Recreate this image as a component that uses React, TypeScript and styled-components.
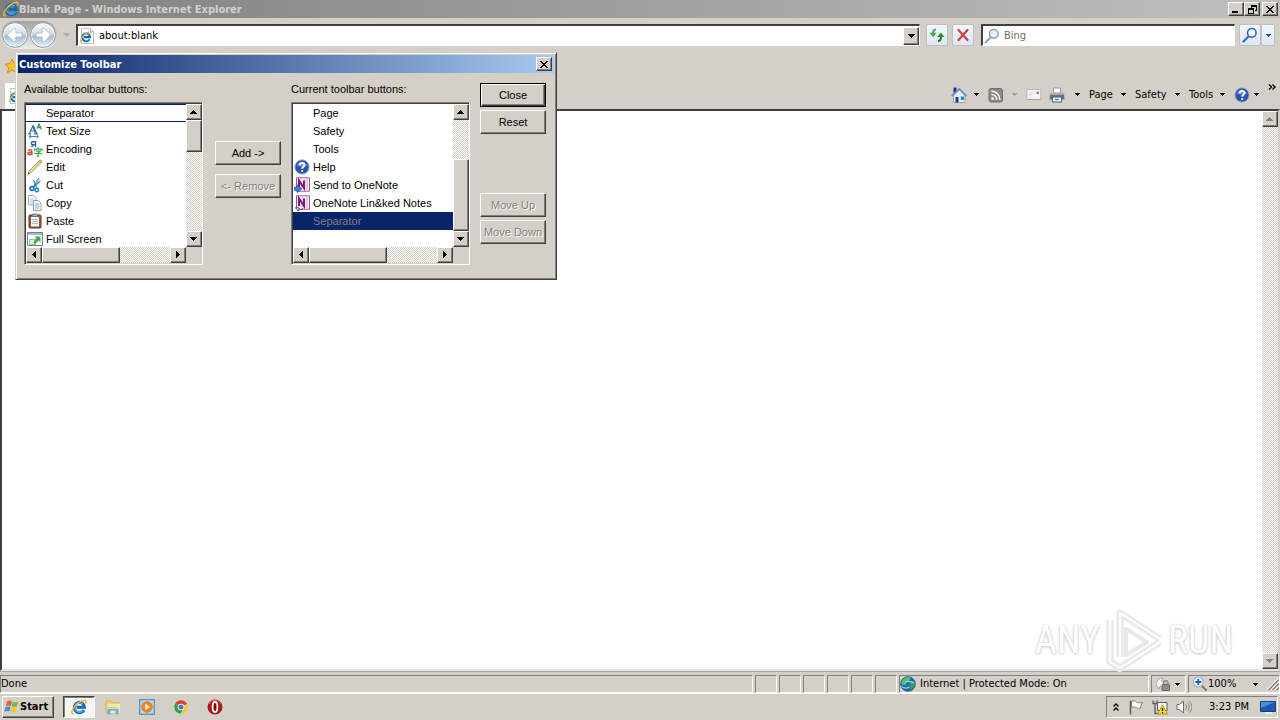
import React from "react";
import styled, { createGlobalStyle, css } from "styled-components";

const FACE = "#d4d0c8";
const UI = '"DejaVu Sans Condensed", "DejaVu Sans", sans-serif';
const DIALOG = '"Liberation Sans", sans-serif';

const GlobalStyle = createGlobalStyle`
  *, *::before, *::after { box-sizing: border-box; }
  body { margin: 0; background: ${FACE}; }
  button, input { font: inherit; color: inherit; margin: 0; }
  svg { display: block; flex: none; }
`;

const raised = css`
  border: 1px solid;
  border-color: #fff #404040 #404040 #fff;
  box-shadow: inset -1px -1px 0 #808080;
`;

const sunken = css`
  border: 1px solid;
  border-color: #808080 #fff #fff #808080;
`;

const dither = css`
  background: repeating-conic-gradient(#fff 0 25%, ${FACE} 0 50%) 0 0 / 2px 2px;
`;

const Desktop = styled.div`
  position: relative;
  display: flex;
  flex-direction: column;
  min-height: 100vh;
  overflow: hidden;
  background: ${FACE};
  color: #000;
  font: 11px/14px ${UI};
`;

/* ---------- window frame ---------- */

const TitleBar = styled.header`
  display: flex;
  align-items: center;
  height: 18px;
  padding: 0 2px 0 3px;
  background: linear-gradient(90deg, #808080, #c0c0c0);
  color: ${FACE};
`;

const WindowTitle = styled.h1`
  flex: 1;
  margin: 0;
  padding-top: 2px;
  font-size: 11px;
  line-height: 14px;
  font-weight: bold;
`;

const CaptionButton = styled.button<{ $gap?: boolean }>`
  ${raised}
  display: flex;
  align-items: center;
  justify-content: center;
  width: 16px;
  height: 14px;
  padding: 0;
  margin-left: ${(p) => (p.$gap ? 2 : 0)}px;
  background: ${FACE};
  color: #000;
`;

const NavRow = styled.nav`
  display: flex;
  align-items: center;
  height: 34px;
  padding-right: 5px;
`;

const TravelButton = styled.button`
  padding: 0;
  border: 0;
  background: none;
  width: 28px;
  height: 28px;
`;

const Travel = styled.div`
  display: flex;
  margin-left: 1px;
  border-radius: 14px;
  background: linear-gradient(#a5a19b, #eeece8);
`;

const HistoryButton = styled.button`
  display: flex;
  justify-content: center;
  width: 19px;
  padding: 0;
  border: 0;
  background: none;
`;

const Field = styled.div<{ $search?: boolean }>`
  display: flex;
  align-items: center;
  flex: ${(p) => (p.$search ? "0 1 254px" : "1 1 0")};
  min-width: 0;
  height: 22px;
  margin-left: ${(p) => (p.$search ? 7 : 0)}px;
  background: #fff;
  border: 1px solid;
  border-color: #404040 #fff #fff #404040;
  border-top-width: 2px;
  border-left-width: 2px;
  padding-left: 1px;
`;

const FieldInput = styled.input`
  flex: 1;
  min-width: 0;
  height: 18px;
  padding: 0 0 0 4px;
  border: 0;
  outline: 0;
  background: none;
  &::placeholder { color: #6d6d6d; opacity: 1; }
`;

const ComboButton = styled.button`
  ${raised}
  display: flex;
  align-items: center;
  justify-content: center;
  width: 16px;
  height: 18px;
  padding: 0;
  background: ${FACE};
`;

const ToolButton = styled.button<{ $w: number; $gap: number }>`
  display: flex;
  align-items: center;
  justify-content: center;
  width: ${(p) => p.$w}px;
  height: 22px;
  padding: 0;
  margin-left: ${(p) => p.$gap}px;
  border: 1px solid #b9c0cc;
  border-radius: 2px;
  background: linear-gradient(#f4f7fb, #dfe6f0);
`;

const FavoritesRow = styled.div`
  display: flex;
  align-items: center;
  height: 28px;
  padding-left: 4px;
`;

const CommandRow = styled.div`
  display: flex;
  align-items: flex-end;
  justify-content: space-between;
  height: 29px;
  padding-left: 5px;
`;

const PageTab = styled.div`
  display: flex;
  align-items: center;
  width: 200px;
  height: 26px;
  padding-left: 3px;
  background: #fff;
`;

const CommandBar = styled.div`
  display: flex;
  align-items: center;
  height: 29px;
`;

const Command = styled.button<{ $w: number }>`
  display: flex;
  align-items: center;
  justify-content: space-between;
  width: ${(p) => p.$w}px;
  height: 20px;
  padding: 0 9px 0 0;
  border: 0;
  background: none;
  white-space: nowrap;
  line-height: 14px;
`;

const Overflow = styled.button`
  align-self: flex-start;
  width: 12px;
  padding: 3px 0 0;
  border: 0;
  background: none;
`;

const Viewport = styled.main`
  display: flex;
  flex: 1;
  justify-content: flex-end;
  border: 2px solid;
  border-color: #404040 ${FACE} #e6e4de #404040;
  background: #fff;
`;

/* ---------- scroll bars ---------- */

const Bar = styled.div<{ $h?: boolean }>`
  ${dither}
  display: flex;
  flex-direction: ${(p) => (p.$h ? "row" : "column")};
  justify-content: space-between;
  width: ${(p) => (p.$h ? "auto" : "16px")};
  height: ${(p) => (p.$h ? "16px" : "auto")};
`;

const ScrollButton = styled.button`
  ${raised}
  display: flex;
  align-items: center;
  justify-content: center;
  flex: none;
  width: 16px;
  height: 16px;
  padding: 0 1px 1px 0;
  background: ${FACE};
`;

const Thumb = styled.div<{ $size: number; $h?: boolean; $end?: boolean }>`
  ${raised}
  background: ${FACE};
  flex: none;
  ${(p) => (p.$h ? `width: ${p.$size}px;` : `height: ${p.$size}px;`)}
  ${(p) => (p.$end ? "margin-top: auto;" : p.$h ? "margin-right: auto;" : "margin-bottom: auto;")}
`;

/* ---------- dialog ---------- */

const Dialog = styled.section`
  position: absolute;
  left: 15px;
  top: 52px;
  width: 542px;
  padding: 2px 2px 14px;
  background: ${FACE};
  border: 1px solid;
  border-color: ${FACE} #404040 #404040 ${FACE};
  box-shadow: inset 1px 1px 0 #fff, inset -1px -1px 0 #808080;
  font: 11px/14px ${DIALOG};
`;

const DialogTitle = styled.header`
  display: flex;
  align-items: center;
  justify-content: space-between;
  height: 18px;
  padding: 0 2px 0 1px;
  background: linear-gradient(90deg, #0a246a, #a6caf0);
`;

const DialogTitleText = styled.h2`
  margin: 0;
  padding-top: 2px;
  color: #fff;
  font: bold 11px/14px ${UI};
`;

const DialogBody = styled.div`
  display: grid;
  grid-template-columns: 179px 68px 179px 66px;
  column-gap: 10px;
  padding: 9px 0 0 6px;
`;

const ListColumn = styled.div`
  display: flex;
  flex-direction: column;
  gap: 6px;
`;

const ListLabel = styled.span`
  line-height: 14px;
`;

const ListFrame = styled.div`
  display: grid;
  grid-template-columns: 1fr 16px;
  grid-template-rows: 143px 16px;
  border: 1px solid;
  border-color: #808080 #fff #fff #808080;
  box-shadow: inset 1px 1px 0 #404040;
  padding: 1px 0 1px 1px;
  background: ${FACE};
`;

const List = styled.ul`
  margin: 0;
  padding: 0;
  overflow: hidden;
  list-style: none;
  background: #fff;
`;

const Item = styled.li<{ $state?: "focus" | "selected" }>`
  display: flex;
  align-items: center;
  gap: 3px;
  height: 18px;
  padding-left: 1px;
  line-height: 14px;
  white-space: nowrap;
  ${(p) => p.$state === "focus" && "box-shadow: inset 0 -1px 0 #0a246a, inset 0 1px 0 #0a246a;"}
  ${(p) => p.$state === "selected" && "background: #0a246a; color: #808080;"}
`;

const IconSlot = styled.span`
  display: flex;
  justify-content: center;
  width: 16px;
`;

const MoveColumn = styled.div`
  display: flex;
  flex-direction: column;
  align-items: flex-end;
  gap: 9px;
  padding-top: 59px;
`;

const ActionColumn = styled.div`
  display: flex;
  flex-direction: column;
  gap: 3px;
  padding-top: 1px;
`;

const PushButton = styled.button<{ $default?: boolean; $push?: boolean }>`
  ${raised}
  width: 66px;
  height: 24px;
  padding: 0;
  margin-top: ${(p) => (p.$push ? 56 : 0)}px;
  background: ${FACE};
  white-space: nowrap;
  ${(p) =>
    p.$default &&
    "border-color: #000; box-shadow: inset 1px 1px 0 #fff, inset -1px -1px 0 #404040, inset -2px -2px 0 #808080;"}
  &:disabled { color: #808080; text-shadow: 1px 1px 0 #fff; }
`;

/* ---------- status bar and task bar ---------- */

const StatusBar = styled.footer`
  display: flex;
  gap: 2px;
  height: 23px;
  padding: 3px 0 0;
  border-bottom: 1px solid #fff;
  border-top: 1px solid #aaa69e;
`;

const StatusCell = styled.div<{ $w?: number }>`
  ${sunken}
  display: flex;
  align-items: center;
  gap: 4px;
  ${(p) => (p.$w ? `flex: 0 0 ${p.$w}px;` : "flex: 1;")}
  white-space: nowrap;
`;

const StatusButton = styled.button`
  display: flex;
  align-items: center;
  justify-content: space-between;
  flex: 1;
  height: 16px;
  padding: 0 5px 0 3px;
  border: 0;
  background: none;
`;

const ZoomLabel = styled.span`
  flex: 1;
  text-align: left;
`;

const TaskBar = styled.footer`
  display: flex;
  align-items: center;
  height: 26px;
  padding: 0 2px;
`;

const StartButton = styled.button`
  ${raised}
  display: flex;
  align-items: center;
  width: 52px;
  height: 22px;
  padding: 0 0 0 1px;
  background: ${FACE};
  font-weight: bold;
`;

const TaskButton = styled.button<{ $active?: boolean }>`
  display: flex;
  align-items: center;
  justify-content: center;
  width: ${(p) => (p.$active ? 32 : 34)}px;
  height: 22px;
  padding: 0;
  border: 0;
  background: none;
  ${(p) =>
    p.$active &&
    css`
      margin: 0 1px 0 9px;
      border: 1px solid;
      border-color: #404040 #fff #fff #404040;
      background: #f6f5f3;
      box-shadow: inset 1px 1px 0 #808080;
    `}
`;

const Tray = styled.div`
  ${sunken}
  display: flex;
  align-items: center;
  gap: 8px;
  width: 172px;
  height: 22px;
  margin-left: auto;
  padding: 0 1px 0 5px;
`;

const TrayChevron = styled.span`
  width: 8px;
`;

const Clock = styled.time`
  flex: 1;
  padding-left: 6px;
  text-align: center;
  white-space: nowrap;
`;

/* ---------- watermark ---------- */

const Watermark = styled.div`
  position: absolute;
  right: 47px;
  bottom: 47px;
  display: flex;
  align-items: center;
  gap: 4px;
  color: #fff;
  font: 38px/64px "Roboto Condensed", "DejaVu Sans Condensed", sans-serif;
  text-shadow: 0 0 2px #c4c4c4, 0 1px 3px #cccccc;
  pointer-events: none;
`;

/* ---------- drawings ---------- */

type Dir = "up" | "down" | "left" | "right";
const arrows: Record<Dir, { w: number; h: number; d: string }> = {
  down: { w: 7, h: 4, d: "M0 0h7v1h-1v1h-1v1h-1v1h-1v-1h-1v-1h-1v-1h-1z" },
  up: { w: 7, h: 4, d: "M3 0h1v1h1v1h1v1h1v1h-7v-1h1v-1h1v-1h1z" },
  left: { w: 4, h: 7, d: "M4 0v7h-1v-1h-1v-1h-1v-1h-1v-1h1v-1h1v-1h1v-1z" },
  right: { w: 4, h: 7, d: "M0 0v7h1v-1h1v-1h1v-1h1v-1h-1v-1h-1v-1h-1v-1z" },
};
const Arrow = ({ dir = "down", color = "#000" }: { dir?: Dir; color?: string }) => {
  const a = arrows[dir];
  return (
    <svg width={a.w} height={a.h} viewBox={`0 0 ${a.w} ${a.h}`} shapeRendering="crispEdges" aria-hidden="true">
      <path d={a.d} fill={color} />
    </svg>
  );
};
const SmallArrow = ({ color = "#000" }: { color?: string }) => (
  <svg width="5" height="3" shapeRendering="crispEdges" aria-hidden="true">
    <path d="M0 0h5v1h-1v1h-1v1h-1v-1h-1v-1h-1z" fill={color} />
  </svg>
);

const Svg = ({ size = 16, children }: { size?: number; children: React.ReactNode }) => (
  <svg width={size} height={size} viewBox="0 0 16 16" aria-hidden="true">
    {children}
  </svg>
);

const IeMark = () => (
  <>
    <path d="M13 11A5.200 5.200 0 1 1 13.600 8.300H5.500" fill="none" stroke="#1268bd" strokeWidth="2.900" />
    <path d="M12.300 11.300A4.900 4.900 0 0 1 3.700 9" fill="none" stroke="#49b9f0" strokeWidth="1.100" />
    <path d="M4.200 5.800A5 5 0 0 1 11.800 5.200" fill="none" stroke="#6fcdf7" strokeWidth="1.100" />
    <path d="M2.800 14.600C-.8 15.800.6 10.600 4.400 6.600 8.600 2.200 14.600-.6 15 2.200c.1.800-.3 1.800-.8 2.700" fill="none" stroke="#f2b91f" strokeWidth="1.400" />
  </>
);
const IeIcon = ({ size = 16 }: { size?: number }) => (
  <Svg size={size}>
    <IeMark />
  </Svg>
);
const IePageIcon = () => (
  <Svg>
    <path d="M2.500.5h9l3 3v12h-12z" fill="#fff" stroke="#b9c1cb" />
    <path d="M11.500.5v3h3" fill="none" stroke="#b9c1cb" />
    <g transform="translate(1 3) scale(.74)">
      <IeMark />
    </g>
  </Svg>
);
const TravelIcon = ({ forward }: { forward?: boolean }) => (
  <svg width="28" height="28" viewBox="0 0 28 28" aria-hidden="true">
    <defs>
      <linearGradient id="orb" x1="0" y1="0" x2="0" y2="1">
        <stop offset="0" stopColor="#f8fafc" />
        <stop offset=".45" stopColor="#d3dbe4" />
        <stop offset=".55" stopColor="#a9bacb" />
        <stop offset="1" stopColor="#d9effb" />
      </linearGradient>
    </defs>
    <circle cx="14" cy="14" r="12.400" fill="#fff" stroke="#8d9aa8" />
    <circle cx="14" cy="14" r="11" fill="url(#orb)" />
    <path
      d="M12.800 7.500L6 14l6.800 6.500h2v-4.500H21v-4h-6.200V7.500z"
      transform={forward ? "translate(28 0) scale(-1 1)" : undefined}
      fill="#fff"
      stroke="#9fb0c2"
      strokeWidth=".7"
    />
  </svg>
);
const Magnifier = ({ color, glass = "#fff" }: { color: string; glass?: string }) => (
  <Svg>
    <path d="M1.500 14.500L6.500 9.500" stroke={color} strokeWidth="2.200" strokeLinecap="round" />
    <circle cx="9.800" cy="5.800" r="4.300" fill={glass} stroke={color} strokeWidth="1.600" />
  </Svg>
);
const RefreshIcon = () => (
  <Svg>
    <path d="M6.800 2.500C4.800 2.500 4 4 4 6.500" fill="none" stroke="#4aa64c" strokeWidth="2" />
    <path d="M.5 5.800h7.200L4.200 10.200z" fill="#4aa64c" />
    <path d="M9 14c2.200 0 3-1.500 3-4.500" fill="none" stroke="#237b2b" strokeWidth="2" />
    <path d="M8.200 10h7.300L11.800 5.600z" fill="#2f8c37" />
  </Svg>
);
const StopIcon = () => (
  <Svg>
    <path d="M3.500 3l9 10M12.500 3l-9 10" stroke="#c8414b" strokeWidth="2.200" strokeLinecap="round" />
  </Svg>
);
const StarIcon = () => (
  <Svg>
    <path d="M8 1l2.100 4.700 5 .5-3.800 3.400 1.100 5L8 12l-4.400 2.600 1.100-5L1 6.200l5-.5z" fill="#fcc32e" stroke="#d58c12" />
  </Svg>
);
const HomeIcon = () => (
  <Svg>
    <path d="M2.500.5h3v5.500h-3z" fill="#24348c" />
    <path d="M2.500 8L8.500 2.500 14 8v7.500h-11.500z" fill="#e8eef7" stroke="#7f93ad" strokeWidth=".8" />
    <path d="M.8 9L8.300 2l7 7" fill="none" stroke="#6a8fc4" strokeWidth="1.800" />
    <path d="M4.500 10h3v5.500h-3z" fill="#1b3e86" />
    <path d="M9.800 9.500h3v3.500h-3z" fill="#1c83b5" />
  </Svg>
);
const FeedIcon = () => (
  <Svg>
    <rect x="1" y="1.500" width="13.500" height="13.500" rx="2" fill="#8a8a8a" stroke="#6e6e6e" />
    <circle cx="4.600" cy="11.600" r="1.400" fill="#fff" />
    <path d="M3.400 7.500a5 5 0 0 1 5.200 5.400M3.400 4.300a8.300 8.300 0 0 1 8.500 8.600" fill="none" stroke="#fff" strokeWidth="1.500" />
  </Svg>
);
const MailIcon = () => (
  <Svg>
    <rect x=".8" y="2.500" width="14" height="10" fill="#f4f2f3" stroke="#b9b7bd" />
    <path d="M3 6h5M3 8h3" stroke="#d5d7e0" />
    <path d="M10.500 4.500h2.500v2.500h-2.500z" fill="#d86a74" />
    <path d="M1.500 12.500h13" stroke="#9a9db0" />
  </Svg>
);
const PrintIcon = () => (
  <Svg>
    <path d="M4.500 1h7v5h-7z" fill="#fff" stroke="#8f98a3" />
    <path d="M1 6.500h14l.5 6H.5z" fill="#6c7278" />
    <path d="M1 6h14v2H1z" fill="#a6abb0" />
    <path d="M3.500 10h9v5h-9z" fill="#eef6ff" stroke="#566273" />
    <path d="M6 12.500h4" stroke="#3a9ad6" strokeWidth="1.500" />
  </Svg>
);
const HelpIcon = () => (
  <Svg>
    <circle cx="8" cy="8" r="7.200" fill="#2c53ae" stroke="#a9b7d6" strokeWidth="1" />
    <path d="M3 6.500a5.300 5.300 0 0 1 10 0c-3 1.500-7 1.500-10 0z" fill="#6f95dc" />
    <path d="M5.700 6.200c0-3 4.800-3 4.800-.2 0 1.700-2.300 1.800-2.300 3.800" fill="none" stroke="#fff" strokeWidth="1.800" />
    <circle cx="8.200" cy="12" r="1.100" fill="#fff" />
  </Svg>
);
const TextSizeIcon = () => (
  <Svg>
    <path d="M2.500 10.500L6 2.800M3.800 8h4.400M1 10.800h3.200M7 10.800h4" fill="none" stroke="#3a6ea8" strokeWidth="1.200" />
    <path d="M5.800 2.500L9.200 10.500" stroke="#3a6ea8" strokeWidth="2" />
    <path d="M10 5.500L12 1l2.500 5.500M10.800 4.500h3" fill="none" stroke="#3f9a5c" strokeWidth="1.300" />
    <path d="M2 13.500h9M4 11.800L2 13.500l2 1.800M9.500 11.800l2 1.700-2 1.800" fill="none" stroke="#2d8fd0" />
  </Svg>
);
const EncodingIcon = () => (
  <Svg>
    <path d="M8.500 6V.8H6C3.800.8 3.800 3.800 6 3.800h2.500M6.500 3.800L4.500 6" fill="none" stroke="#3a58b0" strokeWidth="1.400" />
    <path d="M1 9.300c3-1.200 3.800 0 3.800 1.200V14M4.800 11.200C1.500 11 .8 12 1 12.800c.4 1.500 3 1 3.800-.4" fill="none" stroke="#dd4f2c" strokeWidth="1.600" />
    <path d="M11 6.500v1.300M7.500 10V8.200h7.300V10M9 10.200h4.200L11.200 12v3.200H9.600M7.300 12.500h8" fill="none" stroke="#33a34d" strokeWidth="1.200" />
  </Svg>
);
const EditIcon = () => (
  <Svg>
    <path d="M.8 15.200l1.400-3.400L12.800 1.300c1-.8 2.600.6 1.900 1.700L4.200 13.600z" fill="#ead98c" stroke="#9a8a55" strokeWidth=".8" />
    <path d="M12.200 2l1.900 1.900" stroke="#b9a6a0" strokeWidth="1.500" />
    <path d="M.8 15.200l.7-1.900 1.300 1.200z" fill="#444" />
  </Svg>
);
const CutIcon = () => (
  <Svg>
    <path d="M12 1L6.500 10" stroke="#7f9fc0" strokeWidth="1.800" />
    <path d="M6.500 3L10 11.500" stroke="#5a91c8" strokeWidth="1.500" />
    <path d="M13.500 4L7 9.500" stroke="#3c78c0" strokeWidth="1.200" />
    <circle cx="5" cy="11.500" r="1.900" fill="#fff" stroke="#1f6cc4" strokeWidth="1.600" />
    <circle cx="9.800" cy="13" r="1.700" fill="#fff" stroke="#1f8cd4" strokeWidth="1.600" />
  </Svg>
);
const CopyIcon = () => (
  <Svg>
    <path d="M1.500.5h5l2.500 2.500v7h-7.500z" fill="#fff" stroke="#9aa7b8" />
    <path d="M3 4h4M3 6h4M3 8h4" stroke="#a9c3de" />
    <path d="M6.500 5.500h5l2.500 2.500v7.500h-7.500z" fill="#fff" stroke="#8e9db0" />
    <path d="M8 9h4.500M8 11h4.500M8 13h4.500" stroke="#7fa6d2" />
  </Svg>
);
const PasteIcon = () => (
  <Svg>
    <rect x="2" y="2" width="12" height="13" rx="1" fill="#8b5a3c" stroke="#5f3b27" />
    <path d="M4 4h8v9.500H4z" fill="#f4f6f8" />
    <path d="M5.500 1h5v2.500h-5z" fill="#aab0b8" stroke="#666d76" strokeWidth=".8" />
    <path d="M5 6.500h6M5 8.500h6M5 10.500h6" stroke="#b4bcc8" />
  </Svg>
);
const FullScreenIcon = () => (
  <Svg>
    <path d="M.5 1.500h15v13H.5z" fill="#fff" stroke="#6f8196" />
    <path d="M1 2h14v2H1z" fill="#a9b8c8" />
    <path d="M2.500 8.500h6v5h-6z" fill="#e6f1e6" stroke="#8fbf92" />
    <path d="M7.500 5.500h6V11.500l-1.900-1.900-3.400 3.400-2-2 3.300-3.400z" fill="#3fa84a" />
  </Svg>
);
const OneNoteIcon = ({ linked }: { linked?: boolean }) => (
  <Svg>
    <path d="M2.500.8h13v13.400h-13z" fill="#fff" stroke="#a0559a" />
    <path d="M13 1.500v12" stroke="#c896c4" />
    <path d="M3.500 2h8.500v10.500H3.500z" fill="#f1dcef" />
    <path d="M5 11V3.500L10 11V3.500" fill="none" stroke="#80177a" strokeWidth="2" />
    {linked ? (
      <path d="M1 13.500c1-1.800 3-1.500 4 0s3 1.500 4-.2M3 15c1 .5 2.500.3 3.300-1" fill="none" stroke="#667" strokeWidth="1.200" />
    ) : (
      <path d="M.3 10h3V7.800L8 11.800l-4.700 4V13.600h-3z" fill="#3b7fd4" stroke="#1d4f9a" strokeWidth=".6" />
    )}
  </Svg>
);
const GlobeIcon = () => (
  <Svg>
    <circle cx="8" cy="8" r="7.300" fill="#2268b8" stroke="#1a5590" strokeWidth=".8" />
    <path d="M1.500 6C3 2 7 .5 10.500 1.800L9 5 6.500 6.500 5.500 9 2 9z" fill="#5cc45c" />
    <path d="M9.500 7l4-2 1.600 3-2 4.500L9.500 14l1-3z" fill="#3aa345" />
    <path d="M1.500 10.500c2.500 2 5.500 2 8 .5M5 6c3-1 6-1 9 1" fill="none" stroke="#8ed5f5" strokeWidth="1.200" />
  </Svg>
);
const FilterIcon = () => (
  <Svg>
    <path d="M1 8.500A7 7 0 0 1 8 2l-2 3 4 1-3 5-2-1-1 3z" fill="#f4f4f4" stroke="#a5a5a5" strokeWidth=".8" />
    <path d="M8.500 9V7c0-3 4.500-3 4.500 0v2" fill="none" stroke="#888" strokeWidth="1.400" />
    <rect x="7" y="8.500" width="7.500" height="6" rx=".5" fill="#8b8b8b" stroke="#6a6a6a" />
  </Svg>
);
const ZoomIcon = () => (
  <Svg>
    <path d="M9.500 9.500l5 5" stroke="#8d7048" strokeWidth="2" />
    <circle cx="6.300" cy="6" r="5" fill="#e9f4fd" stroke="#8fb5dc" strokeWidth="1.200" />
    <path d="M6.300 3v6M3.300 6h6" stroke="#1a5fc0" strokeWidth="1.800" />
  </Svg>
);
const GripIcon = () => (
  <svg width="12" height="12" viewBox="0 0 12 12" aria-hidden="true">
    <path d="M0 12L12 0M4 12l8-8M8 12l4-4" stroke="#fff" strokeWidth="1.200" />
    <path d="M1.500 12L12 1.500M5.500 12L12 5.500M9.500 12L12 9.500" stroke="#808080" strokeWidth="1.400" />
  </svg>
);
const FlagLogo = () => (
  <Svg>
    <path d="M3 2.500C5 1.200 6.500 1.500 8 2.300L6.800 7C5.300 6.300 3.700 6.300 1.800 7.300z" fill="#e8602c" />
    <path d="M8.800 2.700c1.700.9 3.500.9 5.600-.3L13 7c-1.800 1.100-3.600 1.100-5.300.2z" fill="#7ab92d" />
    <path d="M1.500 8.200C3.300 7.200 5 7.200 6.500 7.900L5.300 12.600C3.800 11.800 2.200 11.800.2 12.900z" fill="#3a8ede" />
    <path d="M7.300 8.200c1.700.9 3.500.9 5.500-.2l-1.300 4.700c-1.900 1.100-3.800 1.100-5.400.2z" fill="#fbc42c" />
  </Svg>
);
const FolderIcon = () => (
  <Svg>
    <path d="M1 2h5l1 1.500h7V14H1z" fill="#efcf68" stroke="#cfa94a" strokeWidth=".6" />
    <path d="M2.500 5h12.500V14H2.500z" fill="#fae89c" />
    <path d="M2.500 15.500v-5c0-2 2-2 2-2h7c2 0 2 2 2 2v5h-2.800v-4h-5.400v4z" fill="#5db1e6" />
    <path d="M3 9.500h10" stroke="#b4e0f8" />
  </Svg>
);
const MediaIcon = () => (
  <Svg>
    <rect x=".7" y=".7" width="14.600" height="14.600" fill="#b6d6f0" stroke="#4e8ec8" strokeWidth="1.200" />
    <circle cx="8" cy="8" r="5.800" fill="#f0821c" />
    <path d="M6.300 4.800L11 8l-4.700 3.200z" fill="#fff" />
  </Svg>
);
const ChromeIcon = () => (
  <Svg>
    <circle cx="8" cy="8" r="6.700" fill="#fbc92d" />
    <path d="M8 8L2.200 4.700A6.700 6.700 0 0 1 13.800 4.700z" fill="#de3f32" />
    <path d="M2.200 4.700A6.700 6.700 0 0 0 7.500 14.700L10.500 9z" fill="#31a350" />
    <path d="M8 4.700h5.800" stroke="#de3f32" />
    <circle cx="8" cy="8" r="3.300" fill="#fff" />
    <circle cx="8" cy="8" r="2.500" fill="#3c78dc" />
  </Svg>
);
const OperaIcon = () => (
  <Svg>
    <circle cx="8" cy="8" r="7.500" fill="#b3141c" />
    <path d="M2 5a6.700 6.700 0 0 1 12 0" fill="none" stroke="#e0636a" />
    <ellipse cx="8" cy="8" rx="2.400" ry="5" fill="#7d0a10" stroke="#fff" strokeWidth="1.800" />
  </Svg>
);
const FlagIcon = () => (
  <Svg>
    <path d="M2.500 1.500v14" stroke="#606060" strokeWidth="1.600" />
    <path d="M3.500 2.500c2-1 4-.5 5 .5s3 1 6 .5l-2 4 .5 1.500c-2 .5-3.500 0-4.500-.5s-3-1-5 0z" fill="#fff" stroke="#808080" />
  </Svg>
);
const NetworkIcon = () => (
  <Svg>
    <path d="M5.500 3.500h9.500v8H5.500z" fill="#f4f4f4" stroke="#5d5d5d" />
    <path d="M1 1.500v3h4v-3M3 4.500v10h5" fill="none" stroke="#5d5d5d" strokeWidth="1.300" />
    <path d="M10.500 6L15.500 15h-10z" fill="#ffd92e" stroke="#a58614" strokeWidth=".8" />
    <path d="M10.500 9v3M10.500 13v1.200" stroke="#222" strokeWidth="1.300" />
  </Svg>
);
const SoundIcon = () => (
  <Svg>
    <path d="M1 5.500h2.500L7.500 2v12L3.500 10.500H1z" fill="#fff" stroke="#707070" />
    <path d="M9.500 5.500c1.300 1.500 1.300 3.500 0 5M11.500 3.800c2.200 2.500 2.200 6 0 8.400M13.500 2.300c3 3.300 3 8 0 11.400" fill="none" stroke="#8a8a8a" />
  </Svg>
);
const ScreenIcon = () => (
  <Svg>
    <path d="M.5 2.500h15v10H.5z" fill="#1d57b0" stroke="#16407e" />
    <path d="M1 3h14L1 9z" fill="#4a8cd6" />
    <path d="M5 14h7" stroke="#e8ebef" strokeWidth="2" />
  </Svg>
);
const DoubleChevron = ({ up }: { up?: boolean }) => (
  <svg width="8" height="8" viewBox="0 0 8 8" aria-hidden="true">
    <path
      d={up ? "M1.500 3.500L4 1l2.500 2.500M1.500 7.500L4 5l2.500 2.500" : "M1 1.500L3.500 4 1 6.500M4.500 1.500L7 4 4.500 6.500"}
      fill="none"
      stroke="#000"
      strokeWidth="1.400"
    />
  </svg>
);
const PlayMark = () => (
  <svg width="60" height="66" viewBox="0 0 60 66" aria-hidden="true">
    <g fill="none" strokeLinejoin="round">
      <path d="M6 13v42l10 6 40-26M16 50V6l40 26" stroke="#f0f0f0" strokeWidth="8" />
      <path d="M6 13v42l10 6 40-26M16 50V6l40 26" stroke="#e0e0e0" strokeWidth="5" />
      <path d="M22 22v26l21-13z" stroke="#e8e8e8" strokeWidth="4" fill="#fff" />
      <path d="M6 13v42l10 6 40-26M16 50V6l40 26" stroke="#fcfcfc" strokeWidth="3" />
    </g>
  </svg>
);

/* ---------- data ---------- */

type Entry = { text: string; icon?: React.ReactNode; state?: "focus" | "selected" };

const available: Entry[] = [
  { text: "Separator", state: "focus" },
  { text: "Text Size", icon: <TextSizeIcon /> },
  { text: "Encoding", icon: <EncodingIcon /> },
  { text: "Edit", icon: <EditIcon /> },
  { text: "Cut", icon: <CutIcon /> },
  { text: "Copy", icon: <CopyIcon /> },
  { text: "Paste", icon: <PasteIcon /> },
  { text: "Full Screen", icon: <FullScreenIcon /> },
];

const current: Entry[] = [
  { text: "Page" },
  { text: "Safety" },
  { text: "Tools" },
  { text: "Help", icon: <HelpIcon /> },
  { text: "Send to OneNote", icon: <OneNoteIcon /> },
  { text: "OneNote Lin&ked Notes", icon: <OneNoteIcon linked /> },
  { text: "Separator", state: "selected" },
];

const ButtonList = ({ id, label, entries, thumb, atEnd }: { id: string; label: string; entries: Entry[]; thumb: number; atEnd?: boolean }) => (
  <ListColumn>
    <ListLabel id={id}>{label}</ListLabel>
    <ListFrame>
      <List role="listbox" aria-labelledby={id} tabIndex={0}>
        {entries.map((e) => (
          <Item key={e.text} role="option" aria-selected={e.state === "selected"} $state={e.state}>
            <IconSlot>{e.icon}</IconSlot>
            {e.text}
          </Item>
        ))}
      </List>
      <Bar>
        <ScrollButton aria-label="Scroll up"><Arrow dir="up" /></ScrollButton>
        <Thumb $size={thumb} $end={atEnd} />
        <ScrollButton aria-label="Scroll down"><Arrow /></ScrollButton>
      </Bar>
      <Bar $h>
        <ScrollButton aria-label="Scroll left"><Arrow dir="left" /></ScrollButton>
        <Thumb $h $size={78} />
        <ScrollButton aria-label="Scroll right"><Arrow dir="right" /></ScrollButton>
      </Bar>
    </ListFrame>
  </ListColumn>
);

const CloseGlyph = () => (
  <svg width="8" height="7" viewBox="0 0 8 7" shapeRendering="crispEdges" aria-hidden="true">
    <path d="M0 0h2v1h1v1h2v-1h1v-1h2v1h-1v1h-1v1h-1v1h1v1h1v1h1v1h-2v-1h-1v-1h-2v1h-1v1h-2v-1h1v-1h1v-1h1v-1h-1v-1h-1v-1h-1z" fill="#000" />
  </svg>
);

export default function App() {
  return (
    <Desktop>
      <GlobalStyle />
      <TitleBar>
        <IeIcon />
        <WindowTitle>Blank Page - Windows Internet Explorer</WindowTitle>
        <CaptionButton aria-label="Minimize">
          <svg width="8" height="8" shapeRendering="crispEdges"><path d="M0 6h6v2H0z" /></svg>
        </CaptionButton>
        <CaptionButton aria-label="Restore">
          <svg width="9" height="9" shapeRendering="crispEdges">
            <path d="M3 0h6v6H7V5h1V2H4v1H3zM0 3h6v6H0zM1 5v3h4V5z" fillRule="evenodd" />
          </svg>
        </CaptionButton>
        <CaptionButton aria-label="Close window" $gap><CloseGlyph /></CaptionButton>
      </TitleBar>

      <NavRow aria-label="Navigation">
        <Travel>
          <TravelButton aria-label="Back"><TravelIcon /></TravelButton>
          <TravelButton aria-label="Forward"><TravelIcon forward /></TravelButton>
        </Travel>
        <HistoryButton aria-label="Recent pages"><Arrow color="#b5b0a8" /></HistoryButton>
        <Field>
          <IePageIcon />
          <FieldInput aria-label="Address" defaultValue="about:blank" />
          <ComboButton aria-label="Show addresses"><Arrow /></ComboButton>
        </Field>
        <ToolButton $w={22} $gap={6} aria-label="Refresh"><RefreshIcon /></ToolButton>
        <ToolButton $w={22} $gap={4} aria-label="Stop"><StopIcon /></ToolButton>
        <Field $search>
          <Magnifier color="#93a4b5" glass="#e6f3fb" />
          <FieldInput aria-label="Search" placeholder="Bing" />
        </Field>
        <ToolButton $w={22} $gap={4} aria-label="Search"><Magnifier color="#2f66c8" /></ToolButton>
        <ToolButton $w={14} $gap={0} aria-label="Search options"><SmallArrow color="#1d55b8" /></ToolButton>
      </NavRow>

      <FavoritesRow><StarIcon /></FavoritesRow>
      <CommandRow>
        <PageTab><IePageIcon /></PageTab>
        <CommandBar>
          <Command $w={37} aria-label="Home"><HomeIcon /><SmallArrow /></Command>
          <Command $w={38} aria-label="Feeds"><FeedIcon /><SmallArrow color="#a09c96" /></Command>
          <Command $w={23} aria-label="Read mail"><MailIcon /></Command>
          <Command $w={40} aria-label="Print"><PrintIcon /><SmallArrow /></Command>
          <Command $w={46}>Page<SmallArrow /></Command>
          <Command $w={54}>Safety<SmallArrow /></Command>
          <Command $w={45}>Tools<SmallArrow /></Command>
          <Command $w={34} aria-label="Help"><HelpIcon /><SmallArrow /></Command>
          <Overflow aria-label="More commands"><DoubleChevron /></Overflow>
        </CommandBar>
      </CommandRow>

      <Viewport>
        <Bar>
          <ScrollButton disabled aria-label="Scroll up"><Arrow dir="up" color="#808080" /></ScrollButton>
          <ScrollButton disabled aria-label="Scroll down"><Arrow color="#808080" /></ScrollButton>
        </Bar>
      </Viewport>

      <StatusBar>
        <StatusCell>Done</StatusCell>
        {[1, 2, 3, 4, 5, 6].map((n) => (
          <StatusCell key={n} $w={22} />
        ))}
        <StatusCell $w={250}><GlobeIcon />Internet | Protected Mode: On</StatusCell>
        <StatusCell $w={35}>
          <StatusButton aria-label="Filtering"><FilterIcon /><SmallArrow /></StatusButton>
        </StatusCell>
        <StatusCell $w={92}>
          <StatusButton><ZoomIcon /><ZoomLabel>100%</ZoomLabel><SmallArrow /></StatusButton>
          <GripIcon />
        </StatusCell>
      </StatusBar>

      <TaskBar>
        <StartButton><FlagLogo />Start</StartButton>
        <TaskButton $active aria-label="Internet Explorer"><IeIcon /></TaskButton>
        <TaskButton aria-label="Explorer"><FolderIcon /></TaskButton>
        <TaskButton aria-label="Media Player"><MediaIcon /></TaskButton>
        <TaskButton aria-label="Chrome"><ChromeIcon /></TaskButton>
        <TaskButton aria-label="Opera"><OperaIcon /></TaskButton>
        <Tray>
          <TrayChevron><DoubleChevron up /></TrayChevron>
          <FlagIcon />
          <NetworkIcon />
          <SoundIcon />
          <Clock>3:23 PM</Clock>
          <ScreenIcon />
        </Tray>
      </TaskBar>

      <Watermark>
        <span>ANY</span>
        <PlayMark />
        <span>RUN</span>
      </Watermark>

      <Dialog role="dialog" aria-labelledby="dialog-title">
        <DialogTitle>
          <DialogTitleText id="dialog-title">Customize Toolbar</DialogTitleText>
          <CaptionButton aria-label="Close dialog"><CloseGlyph /></CaptionButton>
        </DialogTitle>
        <DialogBody>
          <ButtonList id="available" label="Available toolbar buttons:" entries={available} thumb={32} />
          <MoveColumn>
            <PushButton>Add -&gt;</PushButton>
            <PushButton disabled>&lt;- Remove</PushButton>
          </MoveColumn>
          <ButtonList id="current" label="Current toolbar buttons:" entries={current} thumb={72} atEnd />
          <ActionColumn>
            <PushButton $default>Close</PushButton>
            <PushButton>Reset</PushButton>
            <PushButton disabled $push>Move Up</PushButton>
            <PushButton disabled>Move Down</PushButton>
          </ActionColumn>
        </DialogBody>
      </Dialog>
    </Desktop>
  );
}
